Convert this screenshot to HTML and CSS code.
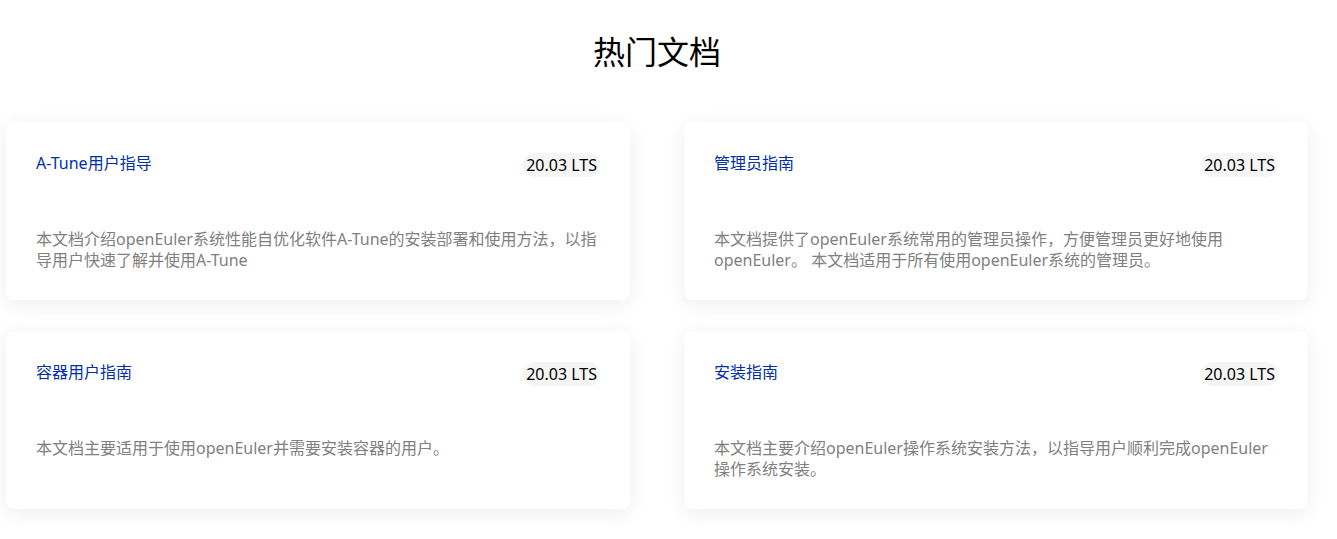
FILE: index.html
```html
<!DOCTYPE html>
<html lang="zh-CN">
<head>
<meta charset="utf-8">
<title>热门文档</title>
<link rel="stylesheet" href="styles.css">
</head>
<body>
<section class="hot">
  <h2 class="hot-title">热门文档</h2>
  <div class="grid">
    <div class="card">
      <div class="card-head">
        <span class="card-name">A-Tune用户指导</span>
        <span class="tag">20.03 LTS</span>
      </div>
      <p class="card-desc">本文档介绍openEuler系统性能自优化软件A-Tune的安装部署和使用方法，以指导用户快速了解并使用A-Tune</p>
    </div>
    <div class="card">
      <div class="card-head">
        <span class="card-name">管理员指南</span>
        <span class="tag">20.03 LTS</span>
      </div>
      <p class="card-desc">本文档提供了openEuler系统常用的管理员操作，方便管理员更好地使用openEuler。 本文档适用于所有使用openEuler系统的管理员。</p>
    </div>
    <div class="card">
      <div class="card-head">
        <span class="card-name">容器用户指南</span>
        <span class="tag">20.03 LTS</span>
      </div>
      <p class="card-desc">本文档主要适用于使用openEuler并需要安装容器的用户。</p>
    </div>
    <div class="card">
      <div class="card-head">
        <span class="card-name">安装指南</span>
        <span class="tag">20.03 LTS</span>
      </div>
      <p class="card-desc">本文档主要介绍openEuler操作系统安装方法，以指导用户顺利完成openEuler操作系统安装。</p>
    </div>
  </div>
</section>
</body>
</html>
```
FILE: styles.css
```css
html, body {
  margin: 0;
  padding: 0;
  background: #ffffff;
}
body {
  font-family: "Noto Sans", "Noto Sans CJK SC", sans-serif;
  color: #000;
}
.hot {
  padding: 30px 29px 30px 6px;
}
.hot-title {
  margin: 0;
  text-align: center;
  font-size: 32px;
  font-weight: 400;
  line-height: 44px;
}
.grid {
  margin-top: 48px;
  display: grid;
  grid-template-columns: 1fr 1fr;
  column-gap: 54px;
  row-gap: 31px;
}
.card {
  background: #fff;
  border-radius: 8px;
  box-shadow: 0 4px 20px rgba(0, 0, 0, 0.07);
  padding: 31px 30px 28px 30px;
  min-height: 119px;
}
.card-head {
  display: flex;
  justify-content: space-between;
  align-items: flex-start;
  height: 24px;
}
.card-name {
  font-size: 16px;
  line-height: 20px;
  color: #002fa7;
}
.tag {
  font-size: 16px;
  line-height: 24px;
  padding: 0 3px;
  background: #f5f5f5;
  border-radius: 12px;
  color: #000;
}
.card-desc {
  margin: 52px 0 0 0;
  font-size: 16px;
  line-height: 21px;
  color: #808080;
}
```
